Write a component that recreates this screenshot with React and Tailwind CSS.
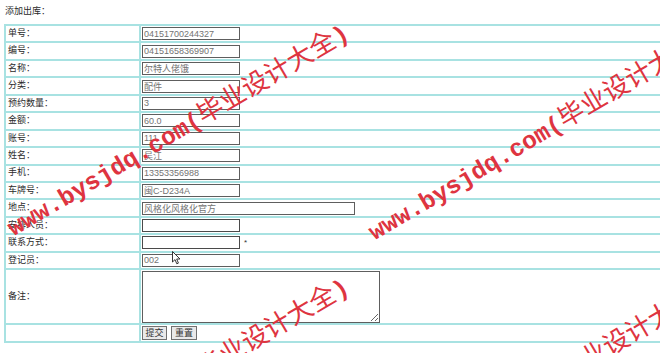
import React from "react";

const rows = [
    ["单号：", "04151700244327"],
    ["编号：", "04151658369907"],
    ["名称：", "尔特人佬饿"],
    ["分类：", "配件"],
    ["预约数量：", "3"],
    ["金额：", "60.0"],
    ["账号：", "111"],
    ["姓名：", "吴江"],
    ["手机：", "13353356988"],
    ["车牌号：", "闽C-D234A"],
    ["地点：", "风格化风格化官方", "wide"],
    ["安排人员：", "", "edit"],
    ["联系方式：", "", "star"],
    ["登记员：", "002"],
];

function Watermark({ className }) {
    return (
        <div
            className={
                "pointer-events-none absolute z-10 h-[30px] whitespace-nowrap leading-[30px] text-[#de3440] origin-[0_50%] -rotate-[30.5deg] " +
                className
            }
        >
            <span className="font-['Liberation_Mono',monospace] text-[24.5px] font-bold">www.bysjdq.com(</span>
            <span className="font-['Noto_Sans_CJK_SC',sans-serif] text-[26px]">毕业设计大全</span>
            <span className="font-['Liberation_Mono',monospace] text-[24.5px] font-bold">)</span>
        </div>
    );
}

export default function App() {
    return (
        <div className="relative h-[353px] w-[660px] overflow-hidden bg-white font-['Liberation_Sans','Noto_Sans_CJK_SC',sans-serif] text-[9px] text-[#2a2a2a]">
            <div className="h-[24px] pl-[5px] pt-[4px] leading-[14px]">添加出库：</div>

            <div className="ml-[4px] w-[700px] border-l-2 border-t-2 border-[#a8e2e2]">
                {rows.map(([label, value, kind]) => (
                    <div key={label} className="flex h-[17.45px] border-b-2 border-[#a8e2e2]">
                        <div className="flex w-[135px] shrink-0 items-center border-r-2 border-[#a8e2e2] pl-[2px]">
                            {label}
                        </div>
                        <div className="flex items-center pl-[1px]">
                            <input
                                readOnly
                                value={value}
                                className={
                                    (kind === "wide" ? "w-[213px] " : "w-[98px] ") +
                                    (kind === "edit" || kind === "star"
                                        ? "border-[#4a4a4a] "
                                        : "border-[#5e5e5e] ") +
                                    "h-[13px] border bg-white px-[1px] text-[9px] leading-none text-[#737373] outline-none"
                                }
                            />
                            {kind === "star" && <span className="ml-[4px] text-[8px] text-[#333]">*</span>}
                        </div>
                    </div>
                ))}

                <div className="flex h-[55px] border-b-2 border-[#a8e2e2]">
                    <div className="flex w-[135px] shrink-0 items-center border-r-2 border-[#a8e2e2] pl-[2px]">
                        备注：
                    </div>
                    <div className="flex items-center pl-[1px]">
                        <textarea className="h-[52px] w-[238px] border border-[#5e5e5e] bg-white outline-none" />
                    </div>
                </div>

                <div className="flex h-[18px] border-b-2 border-[#a8e2e2]">
                    <div className="w-[135px] shrink-0 border-r-2 border-[#a8e2e2]" />
                    <div className="flex items-center gap-[4px] pl-[1px]">
                        <button className="h-[14px] w-[25px] border border-[#707070] bg-[#e9e9e9] text-[9px] leading-none text-[#333]">
                            提交
                        </button>
                        <button className="h-[14px] w-[26px] border border-[#707070] bg-[#e9e9e9] text-[9px] leading-none text-[#333]">
                            重置
                        </button>
                    </div>
                </div>
            </div>

            {/* mouse pointer */}
            <svg className="pointer-events-none absolute left-[172px] top-[251px] z-20" width="9" height="14" viewBox="0 0 9 14">
                <path d="M0.5 0.5 L0.5 11 L3 8.6 L4.8 12.8 L6.4 12.1 L4.7 8 L8 8 Z" fill="#fff" stroke="#222" strokeWidth="0.9" strokeLinejoin="round" />
            </svg>

            <Watermark className="left-[8px] top-[212px]" />
            <Watermark className="left-[369px] top-[216px]" />
            <Watermark className="left-[8px] top-[466px]" />
            <Watermark className="left-[369px] top-[470px]" />
        </div>
    );
}
